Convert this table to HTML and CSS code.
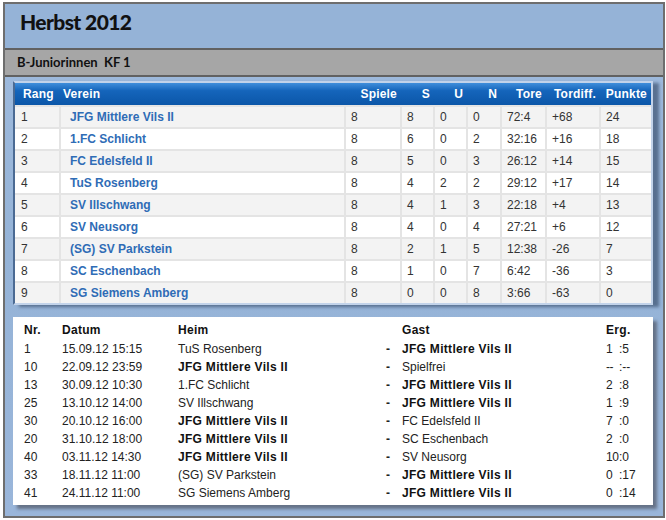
FILE: index.html
```html
<!DOCTYPE html>
<html>
  <head>
    <meta charset="utf-8">
    <title>Herbst 2012</title>
    <link rel="stylesheet" href="styles.css">
  </head>
  <body>
    <div class="frame">
      <!-- Saison -->
      <div class="season">Herbst 2012</div>
      <div class="division">B-Juniorinnen&nbsp; KF 1</div>

      <div class="content">
        <!-- Tabelle -->
        <div class="standings">
          <table>
            <colgroup>
              <col style="width:45px"><col style="width:285px"><col style="width:56px">
              <col style="width:33px"><col style="width:33px"><col style="width:34px">
              <col style="width:45px"><col style="width:54px"><col style="width:51px">
            </colgroup>
            <thead>
              <tr>
                <th class="rank-head">Rang</th>
                <th class="club-head">Verein</th>
                <th>Spiele</th>
                <th>S</th>
                <th>U</th>
                <th>N</th>
                <th>Tore</th>
                <th>Tordiff.</th>
                <th>Punkte</th>
              </tr>
            </thead>
            <tbody>
              <tr><td>1</td><td class="club">JFG Mittlere Vils II</td><td>8</td><td>8</td><td>0</td><td>0</td><td>72:4</td><td>+68</td><td>24</td></tr>
              <tr><td>2</td><td class="club">1.FC Schlicht</td><td>8</td><td>6</td><td>0</td><td>2</td><td>32:16</td><td>+16</td><td>18</td></tr>
              <tr><td>3</td><td class="club">FC Edelsfeld II</td><td>8</td><td>5</td><td>0</td><td>3</td><td>26:12</td><td>+14</td><td>15</td></tr>
              <tr><td>4</td><td class="club">TuS Rosenberg</td><td>8</td><td>4</td><td>2</td><td>2</td><td>29:12</td><td>+17</td><td>14</td></tr>
              <tr><td>5</td><td class="club">SV Illschwang</td><td>8</td><td>4</td><td>1</td><td>3</td><td>22:18</td><td>+4</td><td>13</td></tr>
              <tr><td>6</td><td class="club">SV Neusorg</td><td>8</td><td>4</td><td>0</td><td>4</td><td>27:21</td><td>+6</td><td>12</td></tr>
              <tr><td>7</td><td class="club">(SG) SV Parkstein</td><td>8</td><td>2</td><td>1</td><td>5</td><td>12:38</td><td>-26</td><td>7</td></tr>
              <tr><td>8</td><td class="club">SC Eschenbach</td><td>8</td><td>1</td><td>0</td><td>7</td><td>6:42</td><td>-36</td><td>3</td></tr>
              <tr><td>9</td><td class="club">SG Siemens Amberg</td><td>8</td><td>0</td><td>0</td><td>8</td><td>3:66</td><td>-63</td><td>0</td></tr>
            </tbody>
          </table>
        </div>

        <!-- Spielplan -->
        <div class="matches">
          <div class="match match-head">
            <span>Nr.</span><span>Datum</span><span>Heim</span><span></span><span>Gast</span><span>Erg.</span>
          </div>
          <div class="match">
            <span>1</span><span>15.09.12 15:15</span><span>TuS Rosenberg</span><span class="sep">-</span><b>JFG Mittlere Vils II</b>
            <span class="score"><i>1</i>:5</span>
          </div>
          <div class="match">
            <span>10</span><span>22.09.12 23:59</span><b>JFG Mittlere Vils II</b><span class="sep">-</span><span>Spielfrei</span>
            <span class="score"><i>--</i>:--</span>
          </div>
          <div class="match">
            <span>13</span><span>30.09.12 10:30</span><span>1.FC Schlicht</span><span class="sep">-</span><b>JFG Mittlere Vils II</b>
            <span class="score"><i>2</i>:8</span>
          </div>
          <div class="match">
            <span>25</span><span>13.10.12 14:00</span><span>SV Illschwang</span><span class="sep">-</span><b>JFG Mittlere Vils II</b>
            <span class="score"><i>1</i>:9</span>
          </div>
          <div class="match">
            <span>30</span><span>20.10.12 16:00</span><b>JFG Mittlere Vils II</b><span class="sep">-</span><span>FC Edelsfeld II</span>
            <span class="score"><i>7</i>:0</span>
          </div>
          <div class="match">
            <span>20</span><span>31.10.12 18:00</span><b>JFG Mittlere Vils II</b><span class="sep">-</span><span>SC Eschenbach</span>
            <span class="score"><i>2</i>:0</span>
          </div>
          <div class="match">
            <span>40</span><span>03.11.12 14:30</span><b>JFG Mittlere Vils II</b><span class="sep">-</span><span>SV Neusorg</span>
            <span class="score"><i>10</i>:0</span>
          </div>
          <div class="match">
            <span>33</span><span>18.11.12 11:00</span><span>(SG) SV Parkstein</span><span class="sep">-</span><b>JFG Mittlere Vils II</b>
            <span class="score"><i>0</i>:17</span>
          </div>
          <div class="match">
            <span>41</span><span>24.11.12 11:00</span><span>SG Siemens Amberg</span><span class="sep">-</span><b>JFG Mittlere Vils II</b>
            <span class="score"><i>0</i>:14</span>
          </div>
        </div>
      </div>
    </div>
  </body>
</html>
```

FILE: styles.css
```css
/* Rahmen und Kopfbereich */
body {
  margin: 0;
  background-color: white;
  font-family: "Liberation Sans", Arial, sans-serif;
}

.frame {
  width: 658px;
  margin: 2px 0 0 3px;
  border: 2px solid #6e6e6e;
  background-color: #95b3d7;
}

.season {
  height: 44px;
  padding-left: 15px;
  font-family: Lato, "Liberation Sans", sans-serif;
  font-size: 21px;
  font-weight: 900;
  letter-spacing: -0.6px;
  line-height: 35px;
  color: #111;
}

.division {
  height: 25px;
  padding-left: 12px;
  border-top: 2px solid #616161;
  border-bottom: 2px solid #616161;
  background-color: #a6a6a6;
  font-family: Lato, "Liberation Sans", sans-serif;
  font-size: 13px;
  font-weight: bold;
  line-height: 25px;
  color: #111;
}

.content {
  padding: 4px 8px 11px 8px;
  background: linear-gradient(#9db9dc, #95b3d7 40%, #9ab6da);
}

/* Tabelle */
.standings {
  width: 636px;
  border: 2px solid #c2d3ea;
  border-left-color: #4b6a93;
  background-color: white;
  box-shadow: 6px 2px 3px rgba(45, 65, 95, 0.6);
}

.standings table {
  width: 636px;
  border-collapse: collapse;
  table-layout: fixed;
  font-size: 12px;
}

.standings th {
  height: 22px;
  padding: 0 4px 0 0;
  background: linear-gradient(#3f8edb, #1565bb 35%, #0b56a8);
  color: white;
  font-weight: bold;
  text-align: right;
  letter-spacing: 0.2px;
}

.standings th.rank-head {
  padding-left: 8px;
  text-align: left;
}

.standings th.club-head {
  padding-left: 3px;
  text-align: left;
}

.standings td {
  height: 20px;
  padding: 0 0 0 5px;
  border: 2px solid #e4e4e4;
  color: #333;
  white-space: nowrap;
}

.standings td:first-child {
  padding-left: 6px;
  border-left: none;
}

.standings td:last-child {
  border-right: none;
}

.standings tbody tr:nth-child(odd) {
  background-color: #f3f3f3;
}

.standings tbody tr:last-child td {
  border-bottom: none;
}

.standings td.club {
  padding-left: 9px;
  color: #2f6cb6;
  font-weight: bold;
}

/* Spielplan */
.matches {
  width: 640px;
  margin-top: 12px;
  padding: 3px 0;
  background-color: white;
  box-shadow: 4px 4px 3px rgba(60, 60, 70, 0.55);
  font-size: 12px;
  color: #222;
}

.match {
  display: grid;
  grid-template-columns: 38px 116px 208px 16px 204px auto;
  height: 18px;
  padding-left: 11px;
  line-height: 18px;
  white-space: nowrap;
}

.match-head {
  height: 20px;
  line-height: 20px;
  font-weight: bold;
  letter-spacing: 0.3px;
  color: #111;
}

.match b {
  letter-spacing: 0.3px;
  color: #111;
}

.match .sep {
  font-weight: bold;
}

.score i {
  display: inline-block;
  width: 13px;
  font-style: normal;
  letter-spacing: -0.5px;
}
```
